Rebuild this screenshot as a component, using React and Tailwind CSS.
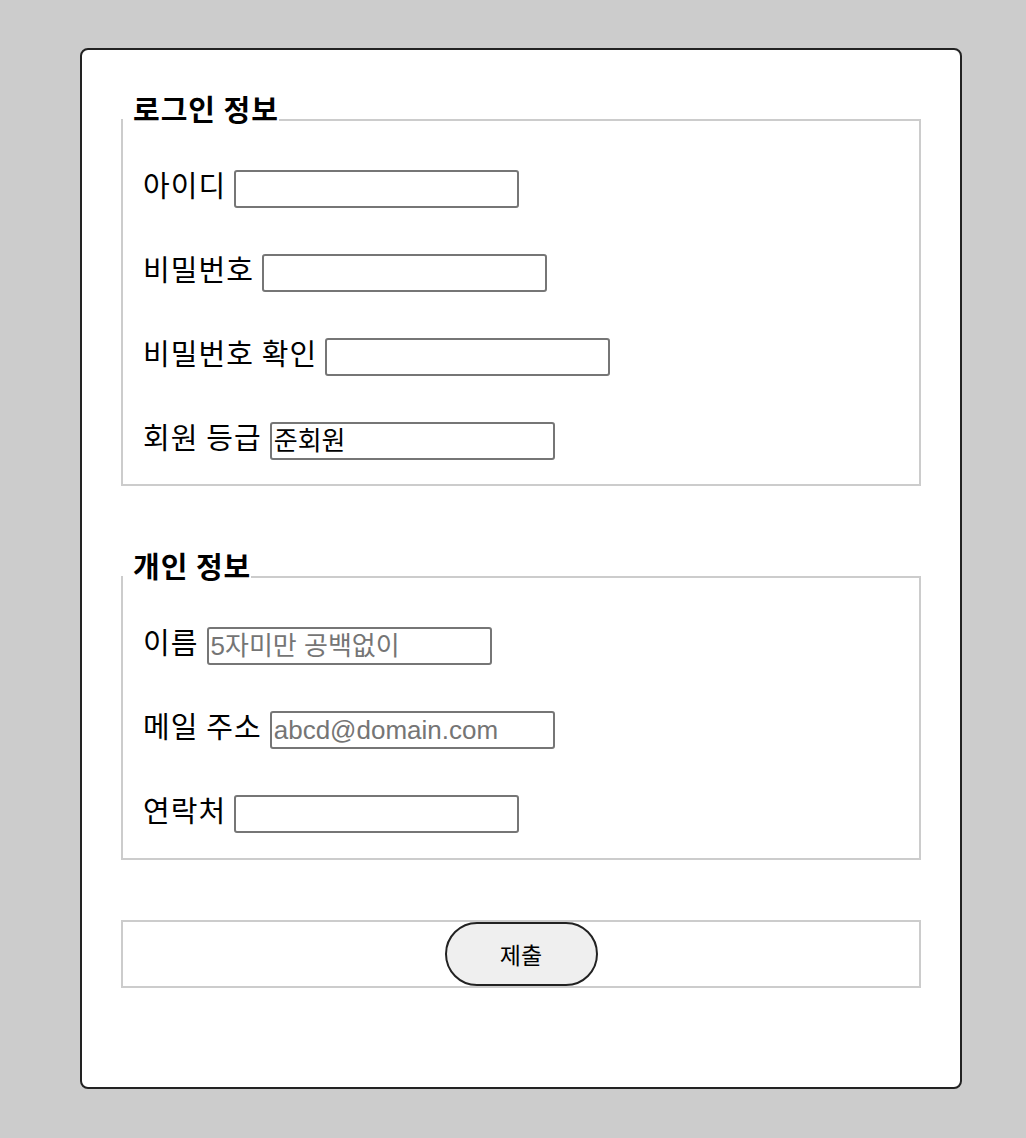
export default function App() {
  const kr = { fontFamily: '"Noto Sans CJK KR", "Noto Sans", sans-serif' };
  const rows1 = [
    { label: "아이디", type: "text" },
    { label: "비밀번호", type: "password" },
    { label: "비밀번호 확인", type: "password" },
    { label: "회원 등급", type: "text", value: "준회원" },
  ];
  const rows2 = [
    { label: "이름", type: "text", placeholder: "5자미만 공백없이" },
    { label: "메일 주소", type: "email", placeholder: "abcd@domain.com" },
    { label: "연락처", type: "tel" },
  ];

  const Row = ({ r }) => (
    <div className="flex items-start">
      <label className="whitespace-nowrap text-[29px] leading-[28px] tracking-[1.1px] text-black">
        {r.label}
      </label>
      <input
        type={r.type}
        defaultValue={r.value}
        placeholder={r.placeholder}
        className="ml-[8px] h-[38px] w-[285px] rounded-[3px] border-2 border-[#767676] bg-white px-[2px] text-[26px] text-black placeholder:text-[#757575] outline-none"
        style={{ fontFamily: '"Liberation Sans", "Noto Sans CJK KR", sans-serif' }}
      />
    </div>
  );

  const Legend = ({ children }) => (
    <div className="relative z-10 ml-[2px] -mb-[5px] block w-fit bg-white pl-[10px] text-[29px] font-bold leading-[32px] tracking-[1px] text-black">
      {children}
    </div>
  );

  return (
    <div className="min-h-[1138px] bg-[#cccccc] pt-[48px] pl-[80px]" style={kr}>
      <form
        className="h-[1041px] w-[882px] rounded-[8px] border-2 border-[#222222] bg-white px-[39px] pt-[42px]"
        onSubmit={(e) => e.preventDefault()}
      >
        <section>
          <Legend>로그인 정보</Legend>
          <div className="flex flex-col gap-[46px] border-2 border-[#cccccc] pt-[49px] pb-[24px] pl-[20px]">
            {rows1.map((r) => (
              <Row key={r.label} r={r} />
            ))}
          </div>
        </section>

        <section className="mt-[63px]">
          <Legend>개인 정보</Legend>
          <div className="flex flex-col gap-[46px] border-2 border-[#cccccc] pt-[49px] pb-[25px] pl-[20px]">
            {rows2.map((r) => (
              <Row key={r.label} r={r} />
            ))}
          </div>
        </section>

        <div className="mt-[60px] flex justify-center border-2 border-[#cccccc]">
          <button
            type="submit"
            className="h-[64px] w-[153px] rounded-full border-2 border-[#222222] bg-[#efefef] text-[23px] text-black"
            style={kr}
          >
            제출
          </button>
        </div>
      </form>
    </div>
  );
}
